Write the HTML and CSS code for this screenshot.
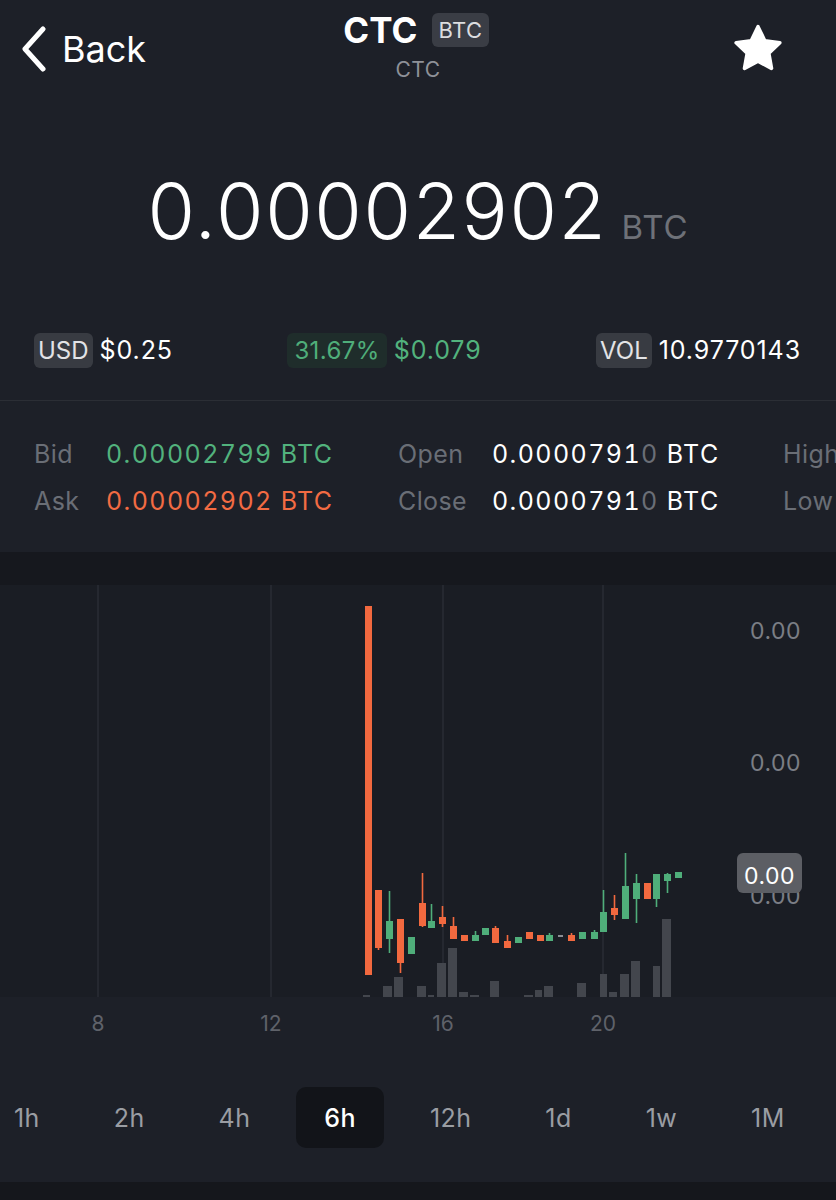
FILE: index.html
```html
<!DOCTYPE html>
<html>
<head>
<meta charset="utf-8">
<link rel="stylesheet" href="styles.css">
</head>
<body>
<div class="screen">
  <header class="topbar">
    <div class="back">
      <svg class="chev" width="26" height="46" viewBox="0 0 26 46"><polyline points="22,3 4,23 22,43" fill="none" stroke="#fff" stroke-width="5" stroke-linecap="round" stroke-linejoin="round"/></svg>
      <span class="back-text">Back</span>
    </div>
    <div class="title-col">
      <div class="title-row"><span class="title">CTC</span><span class="badge-title">BTC</span></div>
      <div class="subtitle">CTC</div>
    </div>
    <div class="fav">
      <svg width="54" height="52" viewBox="0 0 24 23"><path d="M12 1.6l3 6.2 6.7.9-4.9 4.7 1.2 6.7L12 16.9l-6 3.2 1.2-6.7-4.9-4.7 6.7-.9z" fill="#fff" stroke="#fff" stroke-width="1.6" stroke-linejoin="round"/></svg>
    </div>
  </header>

  <section class="price">
    <span class="price-val">0.00002902</span><span class="price-unit">BTC</span>
  </section>

  <section class="stats">
    <div class="stat"><span class="tag">USD</span><span class="stat-val">$0.25</span></div>
    <div class="stat"><span class="tag tag-green">31.67%</span><span class="stat-val green">$0.079</span></div>
    <div class="stat"><span class="tag">VOL</span><span class="stat-val">10.9770143</span></div>
  </section>

  <section class="quotes">
    <span class="lbl">Bid</span><span class="val green">0.00002799 BTC</span>
    <span class="lbl">Open</span><span class="val">0.0000791<span class="dim">0</span> BTC</span>
    <span class="lbl">High</span>
    <span class="lbl">Ask</span><span class="val red">0.00002902 BTC</span>
    <span class="lbl">Close</span><span class="val">0.0000791<span class="dim">0</span> BTC</span>
    <span class="lbl">Low</span>
  </section>

  <div class="band"></div>

  <svg class="chart" width="836" height="465" viewBox="0 585 836 465">
    <rect x="0" y="585" width="836" height="412" fill="#1a1d24"/>
    <g stroke="#2a2d35" stroke-width="1.5">
      <line x1="98" y1="585" x2="98" y2="997"/>
      <line x1="271" y1="585" x2="271" y2="997"/>
      <line x1="443" y1="585" x2="443" y2="997"/>
      <line x1="603" y1="585" x2="603" y2="997"/>
    </g>
    <g fill="#43464d">
      <rect x="363" y="995" width="7" height="2"/>
      <rect x="383" y="986" width="9" height="11"/>
      <rect x="394" y="977" width="9" height="20"/>
      <rect x="417" y="986" width="9" height="11"/>
      <rect x="428" y="995" width="6" height="2"/>
      <rect x="437" y="963" width="9" height="34"/>
      <rect x="448" y="948" width="9" height="49"/>
      <rect x="459" y="992" width="9" height="5"/>
      <rect x="470" y="995" width="9" height="2"/>
      <rect x="490" y="981" width="9" height="16"/>
      <rect x="524" y="995" width="9" height="2"/>
      <rect x="535" y="990" width="7" height="7"/>
      <rect x="544" y="986" width="9" height="11"/>
      <rect x="577" y="983" width="9" height="14"/>
      <rect x="600" y="974" width="7" height="23"/>
      <rect x="609" y="992" width="8" height="5"/>
      <rect x="620" y="974" width="9" height="23"/>
      <rect x="631" y="961" width="9" height="36"/>
      <rect x="653" y="966" width="7" height="31"/>
      <rect x="662" y="919" width="9" height="78"/>
    </g>
    <g stroke="#f2693f" stroke-width="1.6">
      <line x1="378.5" y1="890" x2="378.5" y2="950"/>
      <line x1="400.5" y1="919" x2="400.5" y2="973"/>
      <line x1="422.5" y1="873" x2="422.5" y2="927"/>
      <line x1="442.5" y1="906" x2="442.5" y2="927"/>
      <line x1="453.5" y1="917" x2="453.5" y2="939"/>
      <line x1="495.5" y1="926" x2="495.5" y2="943"/>
      <line x1="507.5" y1="935" x2="507.5" y2="948"/>
      <line x1="571.5" y1="933" x2="571.5" y2="941"/>
      <line x1="614.5" y1="895" x2="614.5" y2="920"/>
    </g>
    <g stroke="#4fae7a" stroke-width="1.6">
      <line x1="389.5" y1="891" x2="389.5" y2="953"/>
      <line x1="431.5" y1="904" x2="431.5" y2="927"/>
      <line x1="475.5" y1="931" x2="475.5" y2="941"/>
      <line x1="549.5" y1="933" x2="549.5" y2="941"/>
      <line x1="594.5" y1="930" x2="594.5" y2="939"/>
      <line x1="603.5" y1="890" x2="603.5" y2="932"/>
      <line x1="625.5" y1="853" x2="625.5" y2="919"/>
      <line x1="636.5" y1="874" x2="636.5" y2="923"/>
      <line x1="656.5" y1="874" x2="656.5" y2="907"/>
      <line x1="667.5" y1="873" x2="667.5" y2="893"/>
    </g>
    <g fill="#f2693f">
      <rect x="365" y="606" width="7" height="369"/>
      <rect x="375" y="890" width="7" height="58"/>
      <rect x="397" y="919" width="7" height="44"/>
      <rect x="419" y="903" width="7" height="23"/>
      <rect x="439" y="917" width="7" height="7"/>
      <rect x="450" y="926" width="7" height="13"/>
      <rect x="461" y="935" width="7" height="6"/>
      <rect x="492" y="928" width="7" height="15"/>
      <rect x="504" y="941" width="7" height="7"/>
      <rect x="526" y="932" width="7" height="7"/>
      <rect x="537" y="935" width="7" height="6"/>
      <rect x="568" y="935" width="7" height="6"/>
      <rect x="611" y="908" width="7" height="7"/>
      <rect x="644" y="883" width="7" height="16"/>
    </g>
    <g fill="#4fae7a">
      <rect x="386" y="921" width="7" height="18"/>
      <rect x="408" y="937" width="7" height="17"/>
      <rect x="428" y="921" width="7" height="7"/>
      <rect x="472" y="935" width="7" height="6"/>
      <rect x="482" y="928" width="7" height="7"/>
      <rect x="515" y="937" width="7" height="6"/>
      <rect x="546" y="935" width="7" height="6"/>
      <rect x="579" y="932" width="7" height="7"/>
      <rect x="591" y="932" width="7" height="7"/>
      <rect x="600" y="912" width="7" height="20"/>
      <rect x="622" y="886" width="7" height="33"/>
      <rect x="633" y="883" width="7" height="16"/>
      <rect x="653" y="874" width="7" height="25"/>
      <rect x="664" y="874" width="7" height="7"/>
      <rect x="675" y="872" width="7" height="6"/>
    </g>
    <rect x="558" y="935" width="5" height="2" fill="#8a8d94"/>
    <g class="ylabel" text-anchor="end">
      <text x="801" y="639">0.00</text>
      <text x="801" y="771">0.00</text>
      <text x="801" y="904">0.00</text>
    </g>
    <rect x="737" y="853" width="65" height="40" rx="6" fill="#5c5e64"/>
    <text class="ybadge" x="769.5" y="884" text-anchor="middle">0.00</text>
    <g class="xlabel" text-anchor="middle">
      <text x="98" y="1031">8</text>
      <text x="271" y="1031">12</text>
      <text x="443" y="1031">16</text>
      <text x="603" y="1031">20</text>
    </g>
  </svg>

  <nav class="tabs">
    <span class="tab">1h</span>
    <span class="tab">2h</span>
    <span class="tab">4h</span>
    <span class="tab active">6h</span>
    <span class="tab">12h</span>
    <span class="tab">1d</span>
    <span class="tab">1w</span>
    <span class="tab">1M</span>
  </nav>

  <div class="footer"></div>
</div>
</body>
</html>
```

FILE: styles.css
```css
* { box-sizing: border-box; }
html, body {
  margin: 0;
  padding: 0;
  background: #1d2028;
}
body {
  font-family: "Inter", "Liberation Sans", sans-serif;
  color: #fff;
  width: 836px;
  height: 1200px;
  overflow: hidden;
}
.screen {
  width: 836px;
  height: 1200px;
  display: flex;
  flex-direction: column;
}

/* header */
.topbar {
  height: 100px;
  display: grid;
  grid-template-columns: 1fr auto 1fr;
  align-items: start;
}
.back {
  height: 98px;
  display: flex;
  align-items: center;
  padding-left: 21px;
  gap: 15px;
}
.back-text {
  font-size: 36px;
  line-height: 40px;
}
.title-col {
  padding-top: 10px;
  display: flex;
  flex-direction: column;
  align-items: center;
}
.title-row {
  display: flex;
  align-items: center;
  gap: 15px;
  height: 40px;
  padding-right: 4px;
}
.title {
  font-size: 35px;
  font-weight: 700;
  line-height: 40px;
}
.badge-title {
  background: #3a3d45;
  color: #dcdde0;
  font-size: 22px;
  line-height: 34px;
  height: 34px;
  padding: 0 6px;
  border-radius: 6px;
  letter-spacing: 0.5px;
}
.subtitle {
  margin-top: 6px;
  font-size: 21px;
  line-height: 28px;
  color: #8e9198;
  letter-spacing: 0.5px;
}
.fav {
  height: 98px;
  display: flex;
  align-items: center;
  justify-content: flex-end;
  padding-right: 51px;
}

/* price */
.price {
  margin-top: 65px;
  height: 92px;
  display: flex;
  align-items: baseline;
  justify-content: center;
  gap: 14px;
}
.price-val {
  font-size: 77px;
  line-height: 92px;
  font-weight: 300;
  letter-spacing: 1.6px;
}
.price-unit {
  font-size: 33px;
  color: #6e7178;
  font-weight: 400;
  letter-spacing: 1px;
}

/* stats */
.stats {
  margin-top: 75px;
  padding: 0 35px 32px 34px;
  border-bottom: 1px solid #2b2e35;
  display: flex;
  justify-content: space-between;
  align-items: center;
}
.stat {
  display: flex;
  align-items: center;
  gap: 7px;
  height: 36px;
}
.tag {
  background: #383b42;
  color: #e2e3e6;
  font-size: 24px;
  line-height: 35px;
  height: 35px;
  padding: 0 4px;
  border-radius: 6px;
}
.tag-green {
  background: #1f2d2b;
  color: #4fae7a;
  padding: 0 7px;
  letter-spacing: 0.4px;
}
.stat-val {
  font-size: 25px;
  letter-spacing: 0.9px;
}
.green { color: #52b27d; }
.red { color: #f26b43; }

/* quotes */
.quotes {
  height: 151px;
  padding: 29px 0 28px 34px;
  display: grid;
  grid-template-columns: 72px 292px 94px 291px 100px;
  grid-auto-rows: 47px;
  align-items: center;
  overflow: hidden;
  white-space: nowrap;
}
.lbl {
  font-size: 25px;
  color: #6a6e76;
  letter-spacing: 0.4px;
}
.val {
  font-size: 25px;
  color: #fff;
  letter-spacing: 1.4px;
  font-variant-numeric: tabular-nums;
}
.val.green { color: #52b27d; }
.val.red { color: #f26b43; }
.dim { color: #6a6e76; }

.band {
  height: 33px;
  background: #16181e;
}

/* chart */
.chart {
  display: block;
  flex: none;
}
.ylabel text {
  font-family: "Inter", "Liberation Sans", sans-serif;
  font-size: 23px;
  fill: #7b7e85;
  letter-spacing: 0.5px;
}
.ybadge {
  font-family: "Inter", "Liberation Sans", sans-serif;
  font-size: 23px;
  fill: #fff;
  letter-spacing: 0.5px;
}
.xlabel text {
  font-family: "Inter", "Liberation Sans", sans-serif;
  font-size: 21px;
  fill: #5f626a;
}

/* tabs */
.tabs {
  margin-top: 37px;
  margin-left: -14px;
  height: 61px;
  display: flex;
  gap: 18px;
  align-items: stretch;
}
.tab {
  padding: 0 28px;
  display: flex;
  align-items: center;
  font-size: 25px;
  color: #9a9da3;
  border-radius: 10px;
  letter-spacing: 0.4px;
}
.tab.active {
  background: #121419;
  color: #fff;
  font-weight: 500;
}
.footer {
  margin-top: 34px;
  flex: 1;
  background: #15171c;
}
```
